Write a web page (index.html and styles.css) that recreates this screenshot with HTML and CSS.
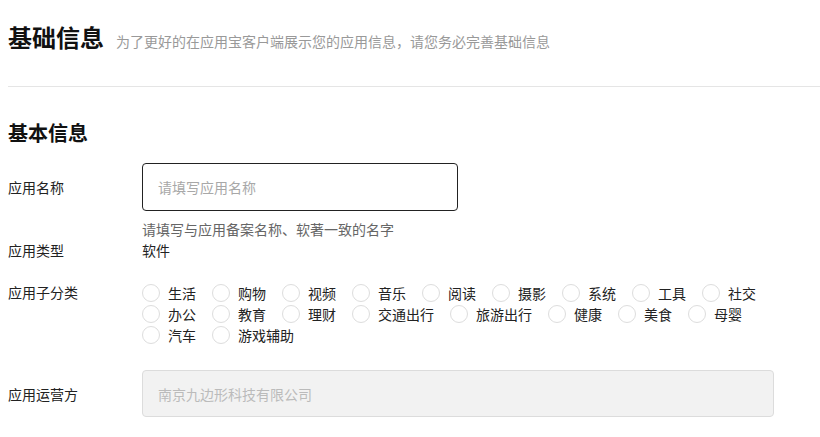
FILE: index.html
```html
<!DOCTYPE html>
<html lang="zh-CN">
<head>
    <meta charset="UTF-8">
    <meta name="viewport" content="width=device-width, initial-scale=1.0">
    <title>基础信息</title>
    <link rel="stylesheet" href="styles.css">
</head>
<body>
    <div class="page-head">
        <h1>基础信息</h1>
        <span class="page-desc">为了更好的在应用宝客户端展示您的应用信息，请您务必完善基础信息</span>
    </div>

    <h2 class="section-title">基本信息</h2>

    <div class="form-row">
        <label class="form-label">应用名称</label>
        <div class="form-control">
            <input class="text-input name-input" type="text" placeholder="请填写应用名称">
        </div>
    </div>
    <div class="form-hint">请填写与应用备案名称、软著一致的名字</div>

    <div class="form-row row-plain">
        <label class="form-label">应用类型</label>
        <div class="form-control">软件</div>
    </div>

    <div class="form-row row-top row-sub">
        <label class="form-label">应用子分类</label>
        <div class="form-control radio-group">
            <label class="radio"><span class="radio-dot"></span>生活</label>
            <label class="radio"><span class="radio-dot"></span>购物</label>
            <label class="radio"><span class="radio-dot"></span>视频</label>
            <label class="radio"><span class="radio-dot"></span>音乐</label>
            <label class="radio"><span class="radio-dot"></span>阅读</label>
            <label class="radio"><span class="radio-dot"></span>摄影</label>
            <label class="radio"><span class="radio-dot"></span>系统</label>
            <label class="radio"><span class="radio-dot"></span>工具</label>
            <label class="radio"><span class="radio-dot"></span>社交</label>
            <label class="radio"><span class="radio-dot"></span>办公</label>
            <label class="radio"><span class="radio-dot"></span>教育</label>
            <label class="radio"><span class="radio-dot"></span>理财</label>
            <label class="radio"><span class="radio-dot"></span>交通出行</label>
            <label class="radio"><span class="radio-dot"></span>旅游出行</label>
            <label class="radio"><span class="radio-dot"></span>健康</label>
            <label class="radio"><span class="radio-dot"></span>美食</label>
            <label class="radio"><span class="radio-dot"></span>母婴</label>
            <label class="radio"><span class="radio-dot"></span>汽车</label>
            <label class="radio"><span class="radio-dot"></span>游戏辅助</label>
        </div>
    </div>

    <div class="form-row row-operator">
        <label class="form-label">应用运营方</label>
        <div class="form-control">
            <input class="text-input operator-input" type="text" placeholder="南京九边形科技有限公司" disabled>
        </div>
    </div>
</body>
</html>
```

FILE: styles.css
```css
* {
    margin: 0;
    padding: 0;
    box-sizing: border-box;
}

body {
    font-family: "Noto Sans CJK SC", "Noto Sans", sans-serif;
    font-size: 14px;
    color: #333;
    background: #fff;
    padding-left: 8px;
}

/* 页面标题 */
.page-head {
    display: flex;
    align-items: baseline;
    gap: 12px;
    height: 87px;
    padding-top: 19px;
    border-bottom: 1px solid #e5e5e5;
    margin-right: -8px;
}

.page-head h1 {
    font-size: 24px;
    line-height: 36px;
    font-weight: 700;
    color: #111;
}

.page-desc {
    font-size: 14px;
    color: #999;
}

.section-title {
    font-size: 20px;
    line-height: 28px;
    font-weight: 700;
    color: #111;
    margin-top: 32px;
    margin-bottom: 16px;
}

/* 表单行 */
.form-row {
    display: flex;
    align-items: center;
}

.row-top {
    align-items: flex-start;
}

.form-label {
    width: 134px;
    flex-shrink: 0;
    line-height: 20px;
    color: #222;
}

.form-control {
    width: 632px;
    line-height: 20px;
    color: #222;
}

.form-hint {
    margin: 8px 0 0 134px;
    line-height: 21px;
    color: #666;
}

.row-plain {
    height: 20px;
}

.row-sub {
    margin-top: 22px;
}

.row-sub .form-label {
    line-height: 21px;
}

.row-operator {
    margin-top: 25px;
}

.text-input {
    display: block;
    font-family: inherit;
    font-size: 14px;
    padding: 0 15px;
    border-radius: 4px;
    outline: none;
}

.text-input::placeholder {
    color: #a8a8a8;
}

.name-input {
    width: 316px;
    height: 48px;
    border: 1px solid #222;
    background: #fff;
}

.operator-input {
    width: 632px;
    height: 47px;
    border: 1px solid #dcdcdc;
    background: #f2f2f2;
}

.operator-input::placeholder {
    color: #bbb;
}

/* 子分类单选 */
.radio-group {
    display: flex;
    flex-wrap: wrap;
}

.radio {
    display: flex;
    align-items: center;
    height: 21px;
    margin-right: 16px;
    color: #222;
    cursor: pointer;
}

.radio-dot {
    width: 18px;
    height: 18px;
    border: 1px solid #ddd;
    border-radius: 50%;
    margin-right: 8px;
}
```
